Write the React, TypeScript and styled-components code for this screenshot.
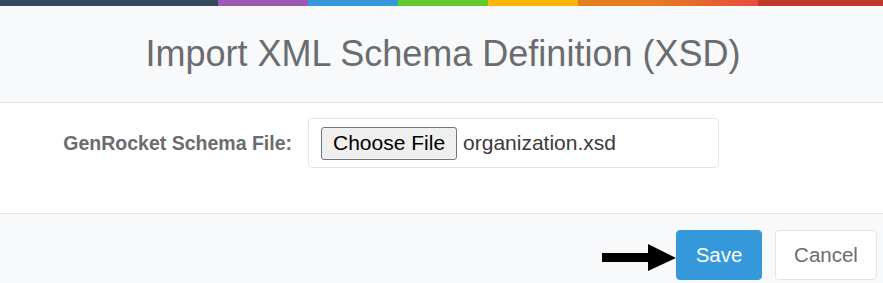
import React from "react";
import styled, { createGlobalStyle } from "styled-components";

const Global = createGlobalStyle`
  html, body { margin: 0; padding: 0; background: #ffffff; }
  body { font-family: "Liberation Sans", Arial, sans-serif; }
`;

const Modal = styled.div`
  width: 883px;
  height: 283px;
  overflow: hidden;
  display: flex;
  flex-direction: column;
  background: #ffffff;
`;

const ColorLine = styled.div`
  height: 6px;
  flex: none;
  background: linear-gradient(
    to right,
    #34495e 0px, #34495e 218px,
    #9b59b6 218px, #9b59b6 308px,
    #3498db 308px, #3498db 398px,
    #62cb31 398px, #62cb31 488px,
    #ffb606 488px, #ffb606 578px,
    #e67e22 578px, #e67e22 648px,
    #e74c3c 758px,
    #c0392b 758px, #c0392b 100%
  );
`;

const Header = styled.div`
  height: 96px;
  flex: none;
  background: #f7f9fa;
  border-bottom: 1px solid #e4e5e7;
  display: flex;
  align-items: center;
  justify-content: center;
  padding-left: 3px;
`;

const Title = styled.h4`
  margin: 0;
  font-size: 36px;
  font-weight: 400;
  color: #6a6c6f;
`;

const Body = styled.div`
  height: 110px;
  flex: none;
  padding-top: 15px;
  box-sizing: border-box;
`;

const FormRow = styled.div`
  display: grid;
  grid-template-columns: 292px 411px;
  column-gap: 16px;
  align-items: center;
`;

const Label = styled.label`
  text-align: right;
  font-weight: 700;
  font-size: 19.5px;
  color: #6a6c6f;
`;

const FileBox = styled.div`
  height: 50px;
  box-sizing: border-box;
  border: 1px solid #e4e5e7;
  border-radius: 4px;
  display: flex;
  align-items: center;
  padding-left: 12px;
  gap: 6px;
`;

const ChooseButton = styled.span`
  height: 33px;
  box-sizing: border-box;
  padding: 0 11px;
  display: inline-flex;
  align-items: center;
  background: #efefef;
  border: 1px solid #767676;
  border-radius: 3px;
  font-size: 21px;
  color: #000000;
`;

const FileName = styled.span`
  font-size: 21px;
  color: #3a3a3a;
`;

const Footer = styled.div`
  flex: 1;
  background: #f7f9fa;
  border-top: 1px solid #e4e5e7;
  display: flex;
  justify-content: flex-end;
  align-items: flex-start;
  padding: 16px 6px 0 0;
  gap: 13px;
`;

const Arrow = styled.svg`
  width: 74px;
  height: 28px;
  margin-top: 14px;
  margin-right: -13px;
`;

const Button = styled.button<{ $primary?: boolean; $w: number }>`
  width: ${(p) => p.$w}px;
  height: 50px;
  box-sizing: border-box;
  padding: 0;
  font-family: "Liberation Sans", Arial, sans-serif;
  font-size: 20.5px;
  border-radius: 4px;
  border: 1px solid ${(p) => (p.$primary ? "#3498db" : "#e4e5e7")};
  background: ${(p) => (p.$primary ? "#3498db" : "#ffffff")};
  color: ${(p) => (p.$primary ? "#ffffff" : "#6a6c6f")};
`;

export default function App() {
  return (
    <>
      <Global />
      <Modal>
        <ColorLine />
        <Header>
          <Title>Import XML Schema Definition (XSD)</Title>
        </Header>
        <Body>
          <FormRow>
            <Label>GenRocket Schema File:</Label>
            <FileBox>
              <ChooseButton>Choose File</ChooseButton>
              <FileName>organization.xsd</FileName>
            </FileBox>
          </FormRow>
        </Body>
        <Footer>
          <Arrow viewBox="0 0 74 28">
            <rect x="0" y="9" width="48" height="9" fill="#000" />
            <polygon points="46,0 74,14 46,27" fill="#000" />
          </Arrow>
          <Button $primary $w={86}>Save</Button>
          <Button $w={102}>Cancel</Button>
        </Footer>
      </Modal>
    </>
  );
}
